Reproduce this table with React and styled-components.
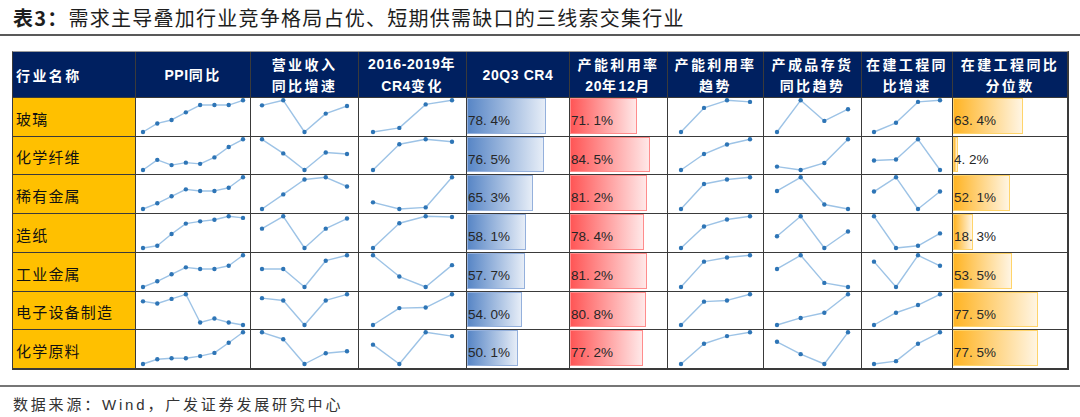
import React from 'react';
import styled, { createGlobalStyle } from 'styled-components';

const GlobalStyle = createGlobalStyle`
  html, body {
    margin: 0;
    padding: 0;
    background: #fff;
  }
  body {
    font-family: "Noto Sans CJK SC", sans-serif;
  }
`;

// column widths (px) and body row heights, grid lines are 1px gaps between them
const COLS = [122, 114, 107, 107, 102, 97, 95, 97, 90, 114];
const ROWS = [38, 37, 38, 38, 38, 37, 38];

const rows = [
  { name: '玻璃', ppi: [0, .27, .38, .62, .85, .85, .85, 1], rev: [.84, 1, 0, .58, .82], chg: [0, .13, .87, 1], cr4: 78.4, util: 71.1, trend: [0, .76, 1, .95], inv: [0, 1, .35, .72], cip: [0, .29, .95, 1], pct: 63.4 },
  { name: '化学纤维', ppi: [0, .33, .16, .24, .2, .41, .75, 1], rev: [1, .54, 0, .57, .52], chg: [0, .84, 1, .92], cr4: 76.5, util: 84.5, trend: [0, .52, .83, 1], inv: [.11, 0, .23, 1], cip: [.31, .34, 1, 0], pct: 4.2 },
  { name: '稀有金属', ppi: [0, .18, .4, .62, .57, .57, .67, 1], rev: [0, .46, .93, 1, .71], chg: [.21, 0, .05, 1], cr4: 65.3, util: 81.2, trend: [0, .79, .93, 1], inv: [.57, 1, .14, 0], cip: [.55, 1, 0, .55], pct: 52.1 },
  { name: '造纸', ppi: [0, .07, .44, .77, .84, .89, 1, .95], rev: [.61, 1, 0, .61, .93], chg: [0, .78, 1, .98], cr4: 58.1, util: 78.4, trend: [0, .68, .9, 1], inv: [.37, 1, 0, .52], cip: [1, 0, .07, .46], pct: 18.3 },
  { name: '工业金属', ppi: [0, .18, .4, .62, .57, .57, .67, 1], rev: [.57, .57, 0, .83, 1], chg: [1, .33, 0, .69], cr4: 57.7, util: 81.2, trend: [0, .8, .93, 1], inv: [.57, 1, .13, 0], cip: [.8, 0, 1, .67], pct: 53.5 },
  { name: '电子设备制造', ppi: [.77, .7, .85, 1, .08, .21, .08, 0], rev: [.875, .8, 0, .8, 1], chg: [0, .55, .57, 1], cr4: 54.0, util: 80.8, trend: [0, .76, .8, 1], inv: [0, .23, .4, 1], cip: [0, .4, .65, 1], pct: 77.5 },
  { name: '化学原料', ppi: [0, .15, .18, .18, .25, .35, .67, 1], rev: [1, .78, 0, .34, .4], chg: [.61, 0, 1, .88], cr4: 50.1, util: 77.2, trend: [0, .64, .88, 1], inv: [.7, .31, 0, 1], cip: [0, .09, .64, 1], pct: 77.5 },
];

const BARS = {
  blue: { from: '#5886c6', to: '#e6edf7', border: '#94b0dc', scale: 0.99 },
  red: { from: '#ff5656', to: '#ffe8e8', border: '#ff8c8c', scale: 0.975 },
  orange: { from: '#ffb424', to: '#fff5e3', border: '#ffd46a', scale: 0.965 },
};

const Page = styled.div`
  width: 1080px;
  height: 417px;
  overflow: hidden;
`;

const Title = styled.div`
  height: 34px;
  padding-left: 13px;
  border-bottom: 2px solid #595959;
  font-size: 20px;
  line-height: 36px;
  letter-spacing: 1.25px;
  color: #1e1e1e;
  white-space: nowrap;
  b {
    font-weight: 700;
  }
`;

const Grid = styled.div`
  margin: 15px 0 0 12px;
  width: max-content;
  display: grid;
  grid-template-columns: ${COLS.map((c) => `${c}px`).join(' ')};
  grid-template-rows: 45px ${ROWS.map((r) => `${r}px`).join(' ')};
  gap: 1px;
  background: #3a3a3a;
  border: 1px solid #3a3a3a;
  border-top-color: #9c9c9c;
  border-right-width: 2px;
  border-bottom-width: 2px;
`;

const HeaderCell = styled.div`
  background: #002060;
  color: #fff;
  font-weight: 700;
  font-size: 14px;
  line-height: 21px;
  letter-spacing: 2.4px;
  display: flex;
  flex-direction: column;
  justify-content: center;
  align-items: ${(p) => (p.$left ? 'flex-start' : 'center')};
  padding-left: ${(p) => (p.$left ? '3px' : '0')};
  padding-top: 1px;
  white-space: nowrap;
`;

const Lat = styled.span`
  font-family: "Liberation Sans", "Noto Sans CJK SC", sans-serif;
  letter-spacing: 0.6px;
`;

const NameCell = styled.div`
  background: #ffc000;
  color: #111;
  font-size: 15px;
  letter-spacing: 1.2px;
  display: flex;
  align-items: center;
  padding: 2px 0 0 3px;
`;

const SparkCell = styled.div`
  background: #fff;
  svg {
    display: block;
  }
`;

const BarCell = styled.div`
  background: #fff;
  display: grid;
`;

const Bar = styled.div`
  grid-area: 1 / 1;
  justify-self: start;
  margin-bottom: 2px;
  box-sizing: border-box;
  border: 1px solid ${(p) => p.$c.border};
  background: linear-gradient(to right, ${(p) => p.$c.from}, ${(p) => p.$c.to});
`;

const BarValue = styled.span`
  grid-area: 1 / 1;
  align-self: center;
  padding: 7px 0 0 1px;
  font-family: "Liberation Sans", Arial, sans-serif;
  font-size: 13.5px;
  color: #262626;
  white-space: nowrap;
`;

const Footer = styled.div`
  margin-top: 15px;
  border-top: 2px solid #767676;
  padding: 8px 0 0 13px;
  font-family: "Liberation Sans", "Noto Sans CJK SC", sans-serif;
  font-size: 15px;
  line-height: 20px;
  letter-spacing: 2.8px;
  color: #333;
`;

const Sparkline = ({ values, width, height, pad }) => {
  const top = 2.3;
  const span = height - 6.3;
  const step = (width - pad * 2) / (values.length - 1);
  const pts = values.map((v, i) => [pad + i * step, top + (1 - v) * span]);
  return (
    <svg width={width} height={height}>
      <polyline
        points={pts.map((p) => p.join(',')).join(' ')}
        fill="none"
        stroke="#9dc3e6"
        strokeWidth="1.4"
        strokeLinejoin="round"
      />
      {pts.map(([x, y], i) => (
        <circle key={i} cx={x} cy={y} r="2.2" fill="#2e75b6" />
      ))}
    </svg>
  );
};

const DataBar = ({ value, kind }) => {
  const c = BARS[kind];
  return (
    <BarCell>
      <Bar $c={c} style={{ width: `${value * c.scale}%` }} />
      <BarValue>{value.toFixed(1).replace('.', '. ')}%</BarValue>
    </BarCell>
  );
};

const App = () => (
  <Page>
    <GlobalStyle />
    <Title>
      <b>表3：</b>需求主导叠加行业竞争格局占优、短期供需缺口的三线索交集行业
    </Title>
    <Grid>
      <HeaderCell $left>行业名称</HeaderCell>
      <HeaderCell><span><Lat>PPI</Lat>同比</span></HeaderCell>
      <HeaderCell><span>营业收入</span><span>同比增速</span></HeaderCell>
      <HeaderCell><span><Lat>2016-2019</Lat>年</span><span><Lat>CR4</Lat>变化</span></HeaderCell>
      <HeaderCell><Lat>20Q3 CR4</Lat></HeaderCell>
      <HeaderCell><span>产能利用率</span><span><Lat>20</Lat>年<Lat>12</Lat>月</span></HeaderCell>
      <HeaderCell><span>产能利用率</span><span>趋势</span></HeaderCell>
      <HeaderCell><span>产成品存货</span><span>同比趋势</span></HeaderCell>
      <HeaderCell><span>在建工程同</span><span>比增速</span></HeaderCell>
      <HeaderCell><span>在建工程同比</span><span>分位数</span></HeaderCell>

      {rows.map((r, i) => {
        const h = ROWS[i];
        return (
          <React.Fragment key={r.name}>
            <NameCell>{r.name}</NameCell>
            <SparkCell><Sparkline values={r.ppi} width={COLS[1]} height={h} pad={7} /></SparkCell>
            <SparkCell><Sparkline values={r.rev} width={COLS[2]} height={h} pad={11} /></SparkCell>
            <SparkCell><Sparkline values={r.chg} width={COLS[3]} height={h} pad={14} /></SparkCell>
            <DataBar value={r.cr4} kind="blue" />
            <DataBar value={r.util} kind="red" />
            <SparkCell><Sparkline values={r.trend} width={COLS[6]} height={h} pad={13} /></SparkCell>
            <SparkCell><Sparkline values={r.inv} width={COLS[7]} height={h} pad={13} /></SparkCell>
            <SparkCell><Sparkline values={r.cip} width={COLS[8]} height={h} pad={12} /></SparkCell>
            <DataBar value={r.pct} kind="orange" />
          </React.Fragment>
        );
      })}
    </Grid>
    <Footer>数据来源：Wind，广发证券发展研究中心</Footer>
  </Page>
);

export default App;
